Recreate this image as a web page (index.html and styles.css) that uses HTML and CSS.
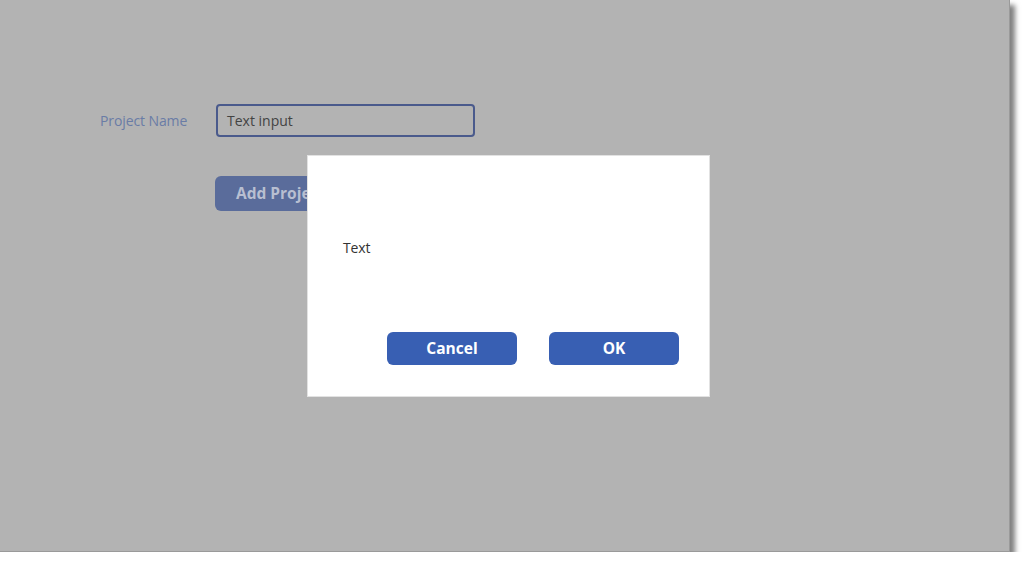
FILE: index.html
```html
<!DOCTYPE html>
<html>
<head>
<meta charset="utf-8">
<link rel="stylesheet" href="styles.css">
</head>
<body>
<div class="screen">
  <div class="form">
    <label class="label">Project Name</label>
    <div class="input">Text input</div>
    <div class="spacer"></div>
    <div class="add-btn">Add Project</div>
  </div>
  <div class="dialog">
    <div class="dialog-text">Text</div>
    <div class="dialog-actions">
      <div class="btn">Cancel</div>
      <div class="btn">OK</div>
    </div>
  </div>
</div>
</body>
</html>
```
FILE: styles.css
```css
html, body {
  margin: 0;
  padding: 0;
  background: #ffffff;
  font-family: "Open Sans", "Noto Sans", sans-serif;
}
.screen {
  position: relative;
  width: 1010px;
  height: 552px;
  background: #b3b3b3;
  box-shadow: 5px 5px 5px rgba(0, 0, 0, 0.5);
  border-right: 1px solid #9a9a9a;
  border-bottom: 1px solid #9a9a9a;
  box-sizing: border-box;
}
.form {
  display: grid;
  grid-template-columns: 116px 259px;
  grid-template-rows: 33px 35px;
  row-gap: 39px;
  padding: 104px 0 0 100px;
}
.label {
  align-self: center;
  font-size: 14px;
  color: #6a7ca6;
  letter-spacing: -0.1px;
}
.input {
  box-sizing: border-box;
  height: 33px;
  border: 2px solid #4a5a8c;
  border-radius: 4px;
  padding-left: 9px;
  font-size: 14px;
  line-height: 29px;
  color: #434343;
}
.add-btn {
  box-sizing: border-box;
  width: 150px;
  height: 35px;
  margin-left: -1px;
  border-radius: 6px;
  background: #5a6c9b;
  color: #b8bfd1;
  font-weight: 700;
  font-size: 15.5px;
  line-height: 35px;
  padding-left: 21px;
}
.dialog {
  position: absolute;
  left: 307px;
  top: 155px;
  width: 403px;
  height: 242px;
  box-sizing: border-box;
  background: #ffffff;
  border: 1px solid #e2e2e2;
  display: flex;
  flex-direction: column;
}
.dialog-text {
  margin: 82px 0 0 35px;
  font-size: 14px;
  line-height: 20px;
  color: #333333;
  letter-spacing: -0.1px;
}
.dialog-actions {
  margin-top: auto;
  margin-bottom: 31px;
  display: flex;
  justify-content: flex-end;
  gap: 31px;
  padding-right: 30px;
}
.btn {
  width: 130px;
  height: 33px;
  border-radius: 6px;
  background: #385fb3;
  color: #ffffff;
  font-weight: 700;
  font-size: 15.5px;
  line-height: 33px;
  text-align: center;
}
.btn:first-child {
  margin-right: 1px;
}
```
